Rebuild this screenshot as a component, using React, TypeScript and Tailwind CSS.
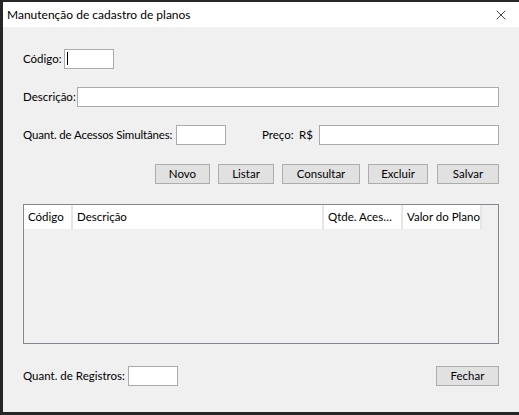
import { X } from 'lucide-react'

const font = "font-['Lato','Liberation_Sans',Arial,sans-serif]"

function TextBox({ className = '', caret = false }: { className?: string; caret?: boolean }) {
  return (
    <div className={`h-5 shrink-0 border border-[#ababab] bg-white ${className}`}>
      {caret && <div className="ml-[2px] mt-[2px] h-[13px] w-px bg-black" />}
    </div>
  )
}

function Button({ label, className = '' }: { label: string; className?: string }) {
  return (
    <button
      type="button"
      className={`flex h-5 items-center justify-center border border-[#adadad] bg-[#e1e1e1] text-[11.5px] leading-none text-black ${className}`}
    >
      {label}
    </button>
  )
}

const columns = [
  { label: 'Código', w: 'w-[49px]' },
  { label: 'Descrição', w: 'w-[251px]' },
  { label: 'Qtde. Aces…', w: 'w-[79px]' },
  { label: 'Valor do Plano', w: 'w-[79px]' },
]

export default function App() {
  return (
    <div className={`h-[415px] w-[519px] bg-[#262626] pl-[3px] pt-[2px] ${font}`}>
      <div className="flex h-[410px] w-[516px] flex-col bg-[#f0f0f0]">
        {/* title bar */}
        <div className="flex h-[25px] shrink-0 items-center justify-between bg-white pl-[4px] pr-[10px]">
          <span className="text-[12px] text-black">Manutenção de cadastro de planos</span>
          <X className="h-[16px] w-[16px] text-black" strokeWidth={1.1} />
        </div>

        <div className="flex flex-1 flex-col px-5 pt-[22px] text-[11.5px] text-black">
          <div className="flex items-center">
            <span className="w-[41px] whitespace-nowrap">Código:</span>
            <TextBox className="w-[50px]" caret />
          </div>

          <div className="mt-[18px] flex items-center">
            <span className="w-[54px] whitespace-nowrap">Descrição:</span>
            <TextBox className="flex-1" />
          </div>

          <div className="mt-[18px] flex items-center">
            <span className="w-[153px] whitespace-nowrap tracking-[-0.15px]">
              Quant. de Acessos Simultânes:
            </span>
            <TextBox className="w-[50px]" />
            <span className="ml-[36px] w-[37px] whitespace-nowrap">Preço:</span>
            <span className="w-[20px]">R$</span>
            <TextBox className="flex-1" />
          </div>

          <div className="mt-[19px] flex justify-end gap-[8px]">
            <Button label="Novo" className="w-[55px]" />
            <Button label="Listar" className="w-[56px]" />
            <Button label="Consultar" className="w-[78px]" />
            <Button label="Excluir" className="w-[60px]" />
            <Button label="Salvar" className="ml-[1px] w-[62px]" />
          </div>

          <div className="mt-[20px] flex h-[140px] flex-col border border-[#828790] bg-[#f0f0f0]">
            <div className="flex h-[24px]">
              {columns.map((c) => (
                <div
                  key={c.label}
                  className={`flex items-center whitespace-nowrap border-r-2 border-[#e5e5e5] bg-white pl-[4px] ${c.w}`}
                >
                  {c.label}
                </div>
              ))}
            </div>
          </div>

          <div className="mt-[22px] flex items-center">
            <span className="w-[105px] whitespace-nowrap">Quant. de Registros:</span>
            <TextBox className="w-[50px]" />
            <div className="flex-1" />
            <Button label="Fechar" className="w-[63px]" />
          </div>
        </div>
      </div>
    </div>
  )
}
